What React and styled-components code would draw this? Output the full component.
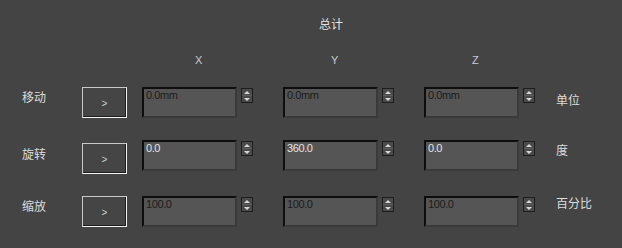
import React from "react"
import styled, { createGlobalStyle } from "styled-components"

const GlobalStyle = createGlobalStyle`
  html, body {
    margin: 0;
    padding: 0;
    background: #444444;
  }
  body {
    width: 622px;
    height: 248px;
    overflow: hidden;
  }
`

const COLUMNS = "82px 60px 141px 141px 132px 1fr"

const Panel = styled.div`
  width: 622px;
  height: 248px;
  box-sizing: border-box;
  padding-top: 17px;
  background: #444444;
  display: flex;
  flex-direction: column;
  font-family: "Liberation Sans", Arial, sans-serif;
`

const GridRow = styled.div`
  display: grid;
  grid-template-columns: ${COLUMNS};
  align-items: start;
  margin-top: ${(p) => p.$gap || 0}px;
  height: ${(p) => (p.$height ? `${p.$height}px` : "auto")};
`

const Title = styled.div`
  grid-column: 4;
  padding-left: 36px;
  font-family: "Noto Sans CJK SC", sans-serif;
  font-size: 12px;
  line-height: 14px;
  color: #e2e2e2;
`

const AxisLabel = styled.div`
  grid-column: ${(p) => p.$col};
  padding-left: ${(p) => p.$offset}px;
  font-size: 11px;
  line-height: 13px;
  color: #c4ccd4;
`

const RowLabel = styled.div`
  padding-left: 22px;
  margin-top: ${(p) => p.$top}px;
  font-family: "Noto Sans CJK SC", sans-serif;
  font-size: 12px;
  line-height: 12px;
  color: #dcdcdc;
`

const UnitLabel = styled(RowLabel)`
  padding-left: 0;
`

const ArrowButton = styled.div`
  width: 45px;
  height: 31px;
  box-sizing: border-box;
  margin-top: ${(p) => p.$top}px;
  border: 1px solid #f2f2f2;
  border-top-color: #c8c8c8;
  border-left-color: #c8c8c8;
  box-shadow: inset -1px -1px 0 #1c1c1c;
  background: #454545;
  display: flex;
  align-items: center;
  justify-content: center;
  font-size: 10px;
  color: #c8d0d8;
  padding-top: 2px;
`

const Field = styled.div`
  display: flex;
  align-items: flex-start;
  gap: 4px;
`

const ValueBox = styled.div`
  width: 95px;
  height: 31px;
  box-sizing: border-box;
  border-style: solid;
  border-width: 2px;
  border-color: #0e0e0e #3a3a3a #3a3a3a #0e0e0e;
  background: #555555;
  padding: 0 2px;
  font-size: 11px;
  line-height: 12px;
  letter-spacing: -0.4px;
  color: ${(p) => (p.$light ? "#e4e4e4" : "#1c1c1c")};
`

const Spinner = styled.div`
  width: 12px;
  height: 15px;
  margin-top: 1px;
  box-sizing: border-box;
  border: 1px solid #1e1e1e;
  background: #4a4a4a;
  display: flex;
  flex-direction: column;
`

const SpinHalf = styled.div`
  flex: 1;
  display: flex;
  align-items: center;
  justify-content: center;
  border-top: ${(p) => (p.$down ? "1px solid #5e5e5e" : "none")};

  &::after {
    content: "";
    width: 0;
    height: 0;
    border-left: 3px solid transparent;
    border-right: 3px solid transparent;
    ${(p) =>
      p.$down
        ? "border-top: 3px solid #d8d8d8;"
        : "border-bottom: 3px solid #d8d8d8;"}
  }
`

const rows = [
  {
    label: "移动",
    unit: "单位",
    values: ["0.0mm", "0.0mm", "0.0mm"],
    labelTop: 4,
    buttonTop: 0,
    unitTop: 7,
    gap: 20,
    height: 31,
  },
  {
    label: "旋转",
    unit: "度",
    values: ["0.0", "360.0", "0.0"],
    light: true,
    labelTop: 8,
    buttonTop: 3,
    unitTop: 4,
    gap: 22,
    height: 34,
  },
  {
    label: "缩放",
    unit: "百分比",
    values: ["100.0", "100.0", "100.0"],
    labelTop: 4,
    buttonTop: 0,
    unitTop: 1,
    gap: 22,
    height: 31,
  },
]

const axes = [
  { name: "X", col: 3, offset: 53 },
  { name: "Y", col: 4, offset: 48 },
  { name: "Z", col: 5, offset: 48 },
]

const App = () => {
  return (
    <>
      <GlobalStyle />
      <Panel>
        <GridRow>
          <Title>总计</Title>
        </GridRow>
        <GridRow $gap={23}>
          {axes.map((a) => (
            <AxisLabel key={a.name} $col={a.col} $offset={a.offset}>
              {a.name}
            </AxisLabel>
          ))}
        </GridRow>
        {rows.map((row) => (
          <GridRow key={row.label} $gap={row.gap} $height={row.height}>
            <RowLabel $top={row.labelTop}>{row.label}</RowLabel>
            <ArrowButton $top={row.buttonTop}>&gt;</ArrowButton>
            {row.values.map((v, i) => (
              <Field key={i}>
                <ValueBox $light={row.light}>{v}</ValueBox>
                <Spinner>
                  <SpinHalf />
                  <SpinHalf $down />
                </Spinner>
              </Field>
            ))}
            <UnitLabel $top={row.unitTop}>{row.unit}</UnitLabel>
          </GridRow>
        ))}
      </Panel>
    </>
  )
}

export default App
